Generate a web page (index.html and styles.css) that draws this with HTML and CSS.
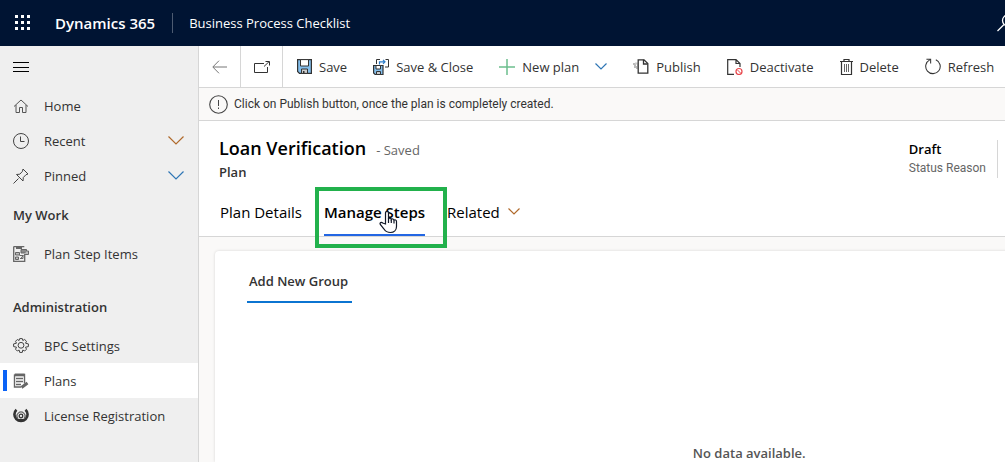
FILE: index.html
```html
<!DOCTYPE html>
<html lang="en">
<head>
<meta charset="utf-8">
<meta name="viewport" content="width=device-width, initial-scale=1">
<title>Business Process Checklist</title>
<link rel="stylesheet" href="styles.css">
</head>
<body>
<header class="topbar">
  <button class="icon-button waffle" aria-label="App launcher">
    <svg width="16" height="16" viewBox="0 0 16 16" fill="#fff"><path d="M0 0h3v3H0zM6 0h3v3H6zM12 0h3v3h-3zM0 6h3v3H0zM6 6h3v3H6zM12 6h3v3h-3zM0 12h3v3H0zM6 12h3v3H6zM12 12h3v3h-3z"/></svg>
  </button>
  <a class="brand" href="#">Dynamics 365</a>
  <a class="app-name" href="#">Business Process Checklist</a>
  <button class="icon-button search" aria-label="Search">
    <svg width="18" height="18" viewBox="0 0 18 18" fill="none" stroke="#fff" stroke-width="1.3"><circle cx="11" cy="6.5" r="5.5"/><path d="M7 10.5L.5 17"/></svg>
  </button>
</header>
<div class="shell">
  <nav class="sidebar" aria-label="Site map">
    <button class="icon-button menu" aria-label="Collapse menu">
      <svg width="16" height="10" viewBox="0 0 16 10" stroke="#000"><path d="M0 .5h16M0 5h16M0 9.500h16" shape-rendering="crispEdges"/></svg>
    </button>
    <ul class="nav-list">
      <li><a class="nav-item" href="#">
        <svg class="nav-icon" viewBox="0 0 16 16" fill="none" stroke="#555"><path d="M1 8.500l7-6.500 7 6.500M3 7v7.500h3.500V9.500h3v5H13V7"/></svg>
        <span>Home</span></a></li>
      <li><button class="nav-item">
        <svg class="nav-icon" viewBox="0 0 16 16" fill="none" stroke="#444"><circle cx="8" cy="8" r="7.500"/><path d="M7.500 3.500v5h4"/></svg>
        <span>Recent</span>
        <svg class="chevron warm" viewBox="0 0 16 9"><path d="M.5.500L8 8 15.500.500"/></svg></button></li>
      <li><button class="nav-item">
        <svg class="nav-icon" viewBox="0 0 16 16" fill="none" stroke="#444"><path d="M.5 15.500L5.500 10.500M10 1l5 5-2 .700-2.700 2.800-.3 3.500L3.500 6.500l3.300-.3L9.500 3.300z"/></svg>
        <span>Pinned</span>
        <svg class="chevron cool" viewBox="0 0 16 9"><path d="M.5.500L8 8 15.500.500"/></svg></button></li>
    </ul>
    <h2 class="nav-heading">My Work</h2>
    <ul class="nav-list">
      <li><a class="nav-item" href="#">
        <svg class="nav-icon" viewBox="0 0 16 16" fill="none" stroke="#666"><path d="M.7.500h10.600M.7.500v14.800h11V8" stroke-width="1.300"/><path d="M3 2h6" stroke-width="2"/><path d="M8 3.500h5.500V7H8z" fill="#888"/><path d="M13.500 5H15.500V8.500h-4" fill="#bbb"/><path d="M2.500 6.500h4v2.500h-4zM2.500 11h3v2.500h-3z" fill="#bbb"/><path d="M6.500 9.500h3.500v3H7M7.500 13l3-4"/></svg>
        <span>Plan Step Items</span></a></li>
    </ul>
    <h2 class="nav-heading spaced">Administration</h2>
    <ul class="nav-list">
      <li><a class="nav-item" href="#">
        <svg class="nav-icon" viewBox="0 0 16 16" fill="none" stroke="#444" stroke-linejoin="round"><path d="M6.700.600h2.600l.5 1.900 1.900-1 1.800 1.800-1 1.900 2.900.7v2.700l-2.900.6 1 2-1.800 1.800-1.900-1-.5 2.400H6.700l-.6-2.400-1.800 1-1.800-1.800 1-2-2.900-.6V5.900l2.900-.7-1-1.900 1.800-1.800 1.800 1z"/><circle cx="8" cy="7.300" r="2.900"/></svg>
        <span>BPC Settings</span></a></li>
      <li><a class="nav-item selected" href="#" aria-current="page">
        <svg class="nav-icon" viewBox="0 0 16 16" fill="none" stroke="#666"><path d="M1.500 1.500h10v9M1.500 1.500v12.500H8" stroke-width="1.400"/><path d="M2 2h9.500" stroke-width="2.600"/><path d="M3 5.500h7M3 8.500h7M3 11.500h5" stroke-width="1.400"/><path d="M8.500 14.500l6-4.500" stroke-width="3"/></svg>
        <span>Plans</span></a></li>
      <li><a class="nav-item" href="#">
        <svg class="nav-icon" viewBox="0 0 16 16" fill="none" stroke="#333"><path d="M3.500 1.800A6.600 6.400 0 1 0 12.500 1.800" stroke-width="2.600"/><path d="M4.800 10.500a4 4 0 1 1 6.400 0" stroke="#666" stroke-width="1.300"/><circle cx="8" cy="8" r="1.800" stroke-width="1.300"/><path d="M4.500 12h7" stroke-width="2.200"/></svg>
        <span>License Registration</span></a></li>
    </ul>
  </nav>
  <main class="main">
    <div class="commands" role="toolbar" aria-label="Commands">
      <button class="command square" aria-label="Back">
        <svg width="15" height="14" viewBox="0 0 15 14" fill="none" stroke="#777"><path d="M15 7H1M7 .7L.8 7 7 13.300"/></svg>
      </button>
      <button class="command square" aria-label="Open in new window">
        <svg width="16" height="12" viewBox="0 0 16 12" fill="none" stroke="#333"><path d="M10 2.500H.5v9h13V6M10 5.500L15 .7M11.500.500h4v4"/></svg>
      </button>
      <div class="command-group">
        <button class="command">
          <svg width="15" height="15" viewBox="0 0 15 15"><path d="M.6.600h13.800v13.800H2.500L.6 12.500z" fill="#83beec" stroke="#333" stroke-width="1.200"/><path d="M3.500.600h8v6.400h-8z" fill="#fff" stroke="#333"/><path d="M4.500 10h6v4.400h-6z" fill="#ccc" stroke="#333"/><path d="M6 12h1.500v2.500H6z" fill="#333"/></svg>
          <span>Save</span></button>
        <button class="command">
          <svg width="16" height="16" viewBox="0 0 16 16"><path d="M.6 6.500h9.400v9H2.200L.6 14z" fill="#83beec" stroke="#333" stroke-width="1.200"/><path d="M3 6.500h4.500v3.500H3z" fill="#fff" stroke="#333"/><path d="M3.500 12.500h4v3h-4z" fill="#ccc" stroke="#333"/><path d="M3.500 5v-4.500H7M12.500.5h3v7.500H12" fill="none" stroke="#333"/><path d="M6.500 5.500V2.800h5.500M10 .8l2 2-2 2" fill="none" stroke="#2b7cc9" stroke-width="1.200"/></svg>
          <span>Save &amp; Close</span></button>
        <div class="split">
          <button class="command">
            <svg width="16" height="16" viewBox="0 0 16 16" stroke="#6cbf8d" stroke-width="1.500"><path d="M8 0v16M0 8h16"/></svg>
            <span>New plan</span></button>
          <button class="command" aria-label="More new plan options"><svg class="chevron cool small" viewBox="0 0 12 7"><path d="M.5.500L6 6 11.500.500"/></svg></button>
        </div>
        <button class="command">
          <svg width="16" height="15" viewBox="0 0 16 15"><path d="M0 5h2v3h2v2" fill="none" stroke="#bbb" stroke-width="2"/><path d="M2 4.500h3V10" fill="none" stroke="#ccc" stroke-width="2"/><path d="M5.200.800h5.800l3.800 3.700v9.700H5.200z" fill="#fff" stroke="#333" stroke-width="1.300"/><path d="M10.500.8V5h4" fill="none" stroke="#333" stroke-width="1.300"/></svg>
          <span>Publish</span></button>
        <button class="command">
          <svg width="16" height="16" viewBox="0 0 16 16" fill="none"><path d="M7 15.300H.7V.600H9L13 4.500V8M9 .600V4.500h4" stroke="#333" stroke-width="1.200"/><circle cx="12" cy="12.500" r="3" stroke="#e8474c" stroke-width="1.200"/><path d="M10 10.500l4 4" stroke="#e8474c"/></svg>
          <span>Deactivate</span></button>
        <button class="command">
          <svg width="13" height="16" viewBox="0 0 13 16" fill="none" stroke="#333"><path d="M0 2.500h13M4 2.500v-2h5v2M1.500 2.500v13h10v-13" stroke-width="1.200"/><path d="M4.500 5v8M6.500 5v8M8.500 5v8" stroke="#666"/></svg>
          <span>Delete</span></button>
        <button class="command">
          <svg width="16" height="17" viewBox="0 0 17 17" fill="none" stroke="#333" stroke-width="1.100"><path d="M11.500 1.300A7.700 7.700 0 1 1 5 1.500M1.500.700h4.500v4.500"/></svg>
          <span>Refresh</span></button>
      </div>
    </div>
    <div class="notice" role="status">
      <svg width="19" height="19" viewBox="0 0 19 19" fill="none" stroke="#444"><circle cx="9.500" cy="9.500" r="8.800" stroke-width="1.100"/><path d="M9.500 5v6M9.500 12.500v1.500"/></svg>
      <span>Click on Publish button, once the plan is completely created.</span>
    </div>
    <section class="record">
      <div class="record-head">
        <div>
          <div class="title-row"><h1 class="title">Loan Verification</h1><span class="saved">- Saved</span></div>
          <div class="entity">Plan</div>
        </div>
        <div class="status">
          <div class="status-value">Draft</div>
          <div class="status-label">Status Reason</div>
        </div>
      </div>
      <div class="tabs" role="tablist">
        <button class="tab" role="tab">Plan Details</button>
        <div class="tab-spot">
          <button class="tab active" role="tab" aria-selected="true">Manage Steps</button>
          <div class="highlight"></div>
          <svg class="pointer" viewBox="0 0 19 24"><path d="M6.500 14V3c0-2.300 3-2.300 3 0v6c.3-1.300 2.700-1 2.800.5.700-1 2.500-.6 2.700.7.900-.7 2.500-.2 2.500 1.300v5c0 3.500-2.500 6-6 6-3 0-5-1-6.500-3.500L1.300 14.500c-.9-1.700 1-2.800 2.400-1.500z" fill="#fff" stroke="#111827" stroke-width="1.200"/><path d="M9.500 8.500v4.500M12.300 9.500v3.500M15 10.500V13.500" stroke="#111827" stroke-width="1.200"/></svg>
        </div>
        <button class="tab related" role="tab">Related <svg class="chevron warm small" viewBox="0 0 12 7"><path d="M.5.500L6 6 11.500.500"/></svg></button>
      </div>
    </section>
    <div class="canvas">
      <section class="card">
        <button class="add-group">Add New Group</button>
        <p class="empty">No data available.</p>
      </section>
    </div>
  </main>
</div>
</body>
</html>
```
FILE: styles.css
```css
* { box-sizing: border-box; }
body {
  margin: 0;
  height: 100vh;
  display: flex;
  flex-direction: column;
  overflow: hidden;
  font: 13px/20px "Segoe UI", "Open Sans", "Noto Sans", sans-serif;
  color: #333;
  background: #fff;
}
button { font: inherit; color: inherit; background: none; border: 0; padding: 0; text-align: left; }
a { color: inherit; text-decoration: none; }
h1, h2, p, ul { margin: 0; padding: 0; }
ul { list-style: none; }
svg { display: block; flex: none; }

.topbar {
  flex: none;
  display: flex;
  align-items: center;
  height: 46px;
  padding-left: 15px;
  background: #001433;
  color: #fff;
}
.icon-button { display: flex; align-items: center; }
.brand { margin-left: 24px; padding-right: 17px; font-size: 15px; font-weight: 600; border-right: 1px solid #4d5b71; }
.app-name { padding-left: 16px; }
.search { margin-left: auto; margin-right: -10px; }

.shell { flex: 1; display: flex; min-height: 0; }
.sidebar { flex: none; width: 199px; background: #efefef; border-right: 1px solid #d6d6d6; }
.menu { height: 42px; padding-left: 13px; }
.nav-item { display: flex; align-items: center; gap: 15px; width: 100%; height: 35px; padding: 0 14px 0 13px; }
.nav-icon { width: 16px; height: 16px; }
.nav-item .chevron { margin-left: auto; }
.selected { background: linear-gradient(#0b63f6, #0b63f6) 3px center / 4px 21px no-repeat #fff; }
.nav-heading { height: 43px; padding-left: 13px; font-size: 13px; font-weight: 600; line-height: 45px; }
.spaced { margin-top: 14px; }
.chevron { width: 16px; height: 9px; fill: none; stroke-width: 1.2; }
.small { width: 12px; height: 7px; }
.warm { stroke: #b06a2c; }
.cool { stroke: #2f76b5; }

.main { flex: 1; min-width: 0; display: flex; flex-direction: column; overflow: hidden; }
.commands { flex: none; display: flex; height: 42px; border-bottom: 1px solid #d6d6d6; }
.command { display: flex; align-items: center; gap: 7px; white-space: nowrap; }
.square { justify-content: center; width: 42px; border-right: 1px solid #d6d6d6; }
.command-group { display: flex; gap: 26px; padding-left: 14px; }
.split { display: flex; gap: 16px; }
.notice {
  flex: none;
  display: flex;
  align-items: center;
  gap: 6px;
  height: 33px;
  padding-left: 10px;
  font-family: "Segoe UI", Roboto, sans-serif;
  font-size: 12px;
  background: #faf9f8;
  border-bottom: 1px solid #d6d6d6;
}
.record { flex: none; border-bottom: 1px solid #d6d6d6; }
.record-head { display: flex; justify-content: space-between; padding: 14px 7px 0 20px; }
.title-row { display: flex; align-items: baseline; gap: 10px; }
.title { font-size: 18px; font-weight: 600; line-height: 27px; color: #000; }
.saved { color: #666; }
.entity { font-weight: 600; }
.status { margin-top: 5px; padding-right: 11px; height: 38px; border-right: 1px solid #d6d6d6; }
.status-value { font-weight: 600; line-height: 18px; color: #000; }
.status-label { font-family: "Segoe UI", Roboto, sans-serif; font-size: 12px; line-height: 20px; color: #666; }
.tabs { display: flex; gap: 22px; padding: 8px 0 0 21px; font-size: 15px; color: #000; }
.tab { height: 46px; padding-bottom: 3px; }
.tab-spot { position: relative; }
.active { padding-bottom: 1px; font-weight: 600; border-bottom: 2px solid #2266e3; }
.highlight { position: absolute; inset: -3px -22px -12px -9px; border: 4px solid #22b14c; }
.pointer { position: absolute; left: 55px; top: 20px; width: 19px; height: 24px; }
.related { display: flex; align-items: center; gap: 8px; }

.canvas { flex: 1; min-height: 0; padding: 14px 0 0 16px; background: #faf9f8; }
.card { width: 135%; height: 100%; padding: 20px 0 0 32px; background: #fff; border-radius: 4px 0 0 0; box-shadow: 0 0 3px rgba(0, 0, 0, .15); }
.add-group { padding: 0 4px 10px 2px; font-weight: 600; border-bottom: 2px solid #0b74d1; }
.empty { margin: 142px 30px 0 0; text-align: center; font-weight: 600; line-height: 16px; color: #555; }
```
